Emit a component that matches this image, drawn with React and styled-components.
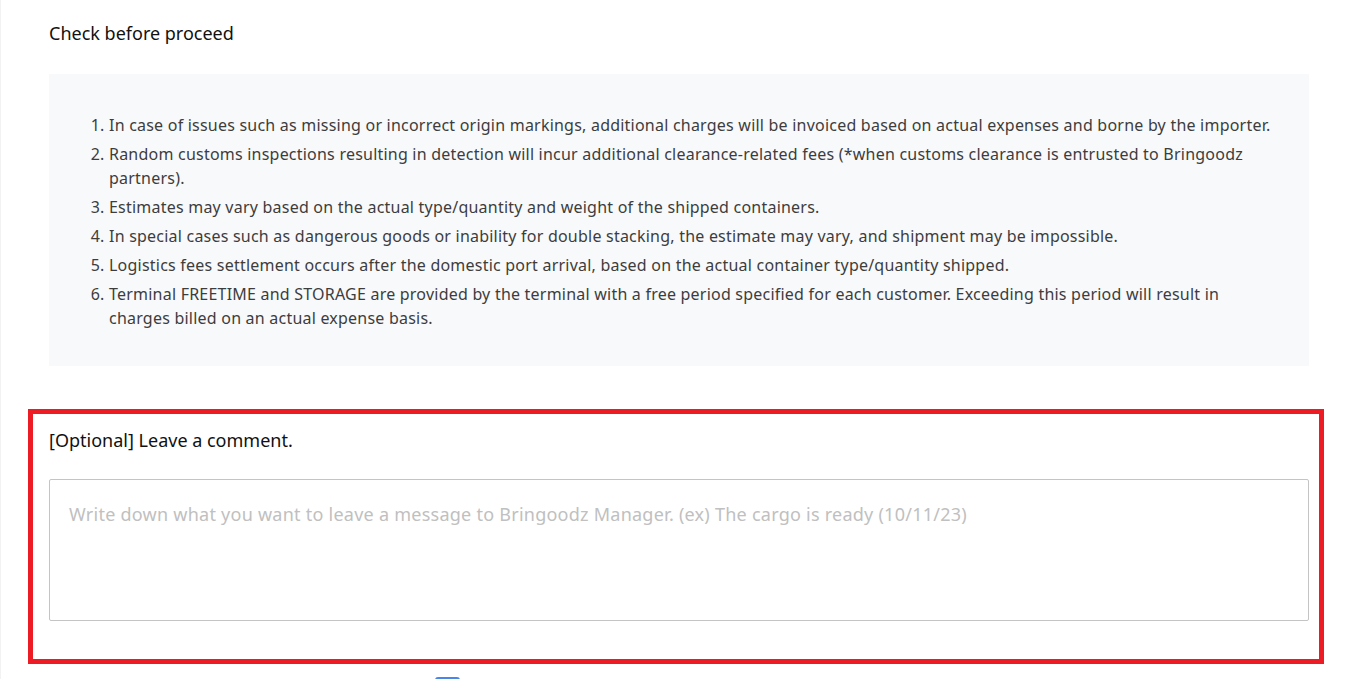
import React from "react"
import styled, { createGlobalStyle } from "styled-components"

const notes = [
  "In case of issues such as missing or incorrect origin markings, additional charges will be invoiced based on actual expenses and borne by the importer.",
  "Random customs inspections resulting in detection will incur additional clearance-related fees (*when customs clearance is entrusted to Bringoodz partners).",
  "Estimates may vary based on the actual type/quantity and weight of the shipped containers.",
  "In special cases such as dangerous goods or inability for double stacking, the estimate may vary, and shipment may be impossible.",
  "Logistics fees settlement occurs after the domestic port arrival, based on the actual container type/quantity shipped.",
  "Terminal FREETIME and STORAGE are provided by the terminal with a free period specified for each customer. Exceeding this period will result in charges billed on an actual expense basis.",
]

const GlobalStyle = createGlobalStyle`
  html, body {
    margin: 0;
    padding: 0;
    background: #fff;
    font-family: "Noto Sans", "Open Sans", "Noto Sans CJK KR", sans-serif;
  }
`

const App = () => {
  return (
    <Page>
      <GlobalStyle />
      <Title>Check before proceed</Title>
      <NoticeBox>
        <NoticeList>
          {notes.map((n, i) => (
            <li key={i}>{n}</li>
          ))}
        </NoticeList>
      </NoticeBox>
      <CommentSection>
        <Label htmlFor="comment">[Optional] Leave a comment.</Label>
        <Comment
          id="comment"
          placeholder="Write down what you want to leave a message to Bringoodz Manager. (ex) The cargo is ready (10/11/23)"
        />
      </CommentSection>
      <Actions>
        <Check />
      </Actions>
    </Page>
  )
}

const Page = styled.div`
  height: 679px;
  overflow: hidden;
  box-sizing: border-box;
  padding: 20px 42px 0 48px;
  border-left: 1px solid #f2f2f2;
`

const Title = styled.h2`
  margin: 0;
  font-size: 18px;
  font-weight: 400;
  line-height: 26px;
  color: #111;
`

const NoticeBox = styled.div`
  margin-top: 28px;
  background: #f8f9fb;
  padding: 39px 36px 36px 40px;
`

const NoticeList = styled.ol`
  margin: 0;
  padding-left: 20px;
  color: #3d3d3d;
  font-size: 16px;
  line-height: 24px;
  letter-spacing: 0.22px;

  li {
    margin-bottom: 5px;
  }
  li:last-child {
    margin-bottom: 0;
  }
`

const CommentSection = styled.section`
  margin: 43px -15px 0 -21px;
  border: 5px solid #ed1c24;
  padding: 14px 10px 38px 16px;
  display: flex;
  flex-direction: column;
`

const Label = styled.label`
  font-size: 18px;
  line-height: 24px;
  color: #111;
`

const Comment = styled.textarea`
  margin-top: 27px;
  height: 142px;
  box-sizing: border-box;
  border: 1px solid #c4c4c4;
  border-radius: 2px;
  padding: 22px 19px;
  resize: none;
  font-family: inherit;
  font-size: 18px;
  line-height: 24px;
  letter-spacing: 0.25px;
  color: #333;
  outline: none;

  &::placeholder {
    color: #c0c0c0;
  }
`

const Actions = styled.div`
  display: flex;
  padding-left: 386px;
  margin-top: 13px;
`

const Check = styled.span`
  width: 25px;
  height: 25px;
  border-radius: 3px;
  background: #4a86e8;
`

export default App
